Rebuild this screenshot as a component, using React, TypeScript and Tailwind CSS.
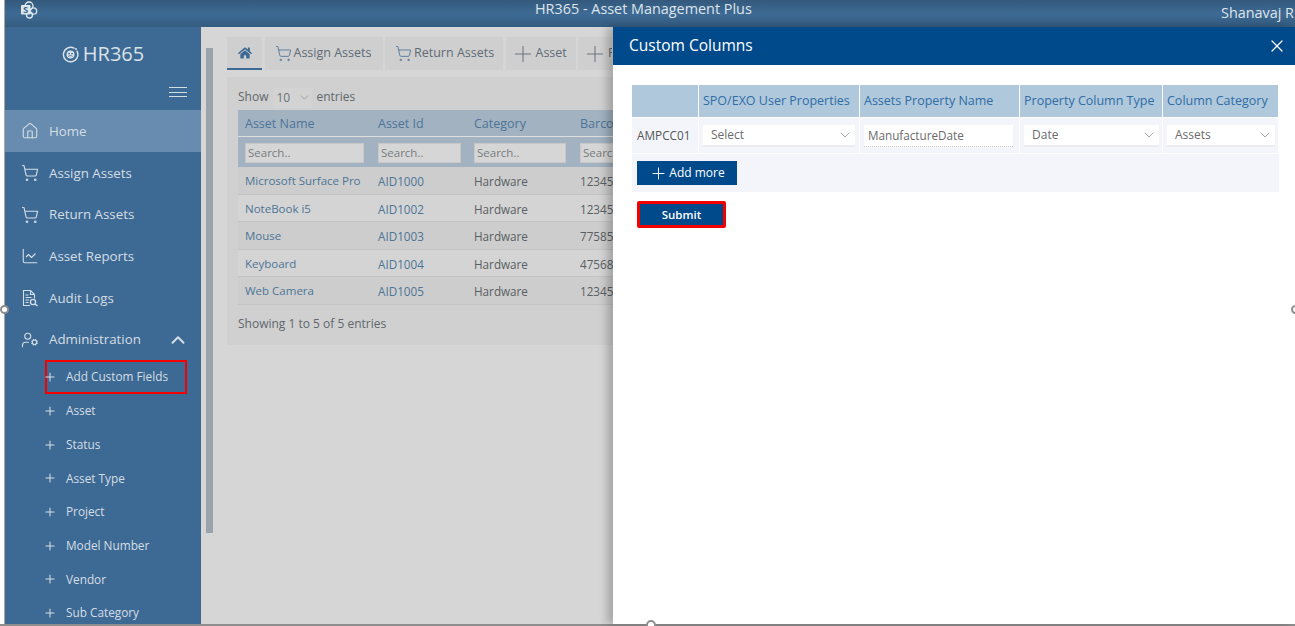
import { ChartLine, ChevronDown, ChevronUp, Home, Plus, ShoppingCart, UserCog, X } from 'lucide-react';
import { FaHome } from 'react-icons/fa';

function AuditIcon({ size = 18 }: { size?: number }) {
  return (
    <svg width={size} height={size} viewBox="0 0 18 18" fill="none" stroke="currentColor" strokeWidth="1.1">
      <path d="M9 16.5H2.5v-15h7l4 4v4" />
      <path d="M9.5 1.5v4h4" />
      <path d="M4.5 6h3M4.5 8.5h6M4.5 11h3.5M4.5 13.5h3" />
      <circle cx="12" cy="13" r="2.6" strokeWidth="1.3" />
      <path d="M14 15l2.5 2" strokeWidth="1.6" />
    </svg>
  );
}

const NAV = [
  { label: 'Home', icon: Home, active: true },
  { label: 'Assign Assets', icon: ShoppingCart },
  { label: 'Return Assets', icon: ShoppingCart },
  { label: 'Asset Reports', icon: ChartLine },
  { label: 'Audit Logs', icon: AuditIcon },
];

const SUB_NAV = ['Asset', 'Status', 'Asset Type', 'Project', 'Model Number', 'Vendor', 'Sub Category'];

const ROWS = [
  { name: 'Microsoft Surface Pro', id: 'AID1000', barcode: '12345' },
  { name: 'NoteBook i5', id: 'AID1002', barcode: '12345' },
  { name: 'Mouse', id: 'AID1003', barcode: '77585' },
  { name: 'Keyboard', id: 'AID1004', barcode: '47568' },
  { name: 'Web Camera', id: 'AID1005', barcode: '12345' },
];

function SharePointLogo() {
  return (
    <svg width="18" height="18" viewBox="0 0 18 18" fill="none" className="text-[#dfe6ec]">
      <circle cx="9" cy="5" r="4" stroke="currentColor" strokeWidth="1.3" />
      <circle cx="13.5" cy="10" r="3.2" stroke="currentColor" strokeWidth="1.3" />
      <circle cx="9.5" cy="14" r="3" stroke="currentColor" strokeWidth="1.3" />
      <rect x="1" y="4" width="9.5" height="9.5" rx="1" fill="currentColor" />
      <text x="5.7" y="12" textAnchor="middle" fontSize="9.5" fontWeight="700" fill="#3d6a94" fontFamily="'Open Sans', sans-serif">S</text>
    </svg>
  );
}

function HrLogo() {
  return (
    <svg width="17" height="17" viewBox="0 0 17 17" fill="none" className="text-[#dbe2e8]">
      <path d="M12 2.2A7.2 7.2 0 1 0 15 5.2" stroke="currentColor" strokeWidth="1.5" strokeLinecap="round" />
      <circle cx="14" cy="3" r="1" fill="currentColor" />
      <circle cx="8.5" cy="8.5" r="4" fill="currentColor" />
      <circle cx="7" cy="7.6" r="0.9" fill="#3d6a94" />
      <circle cx="10" cy="7.6" r="0.9" fill="#3d6a94" />
      <path d="M6.4 10.4c1.2-1 3-1 4.2 0" stroke="#3d6a94" strokeWidth="0.9" />
    </svg>
  );
}

function Sidebar() {
  return (
    <aside className="w-[196px] shrink-0 bg-[#3d6a94] text-[#d5dde4] overflow-hidden">
      <div className="h-[54px] flex items-center justify-center gap-[4px] text-[#dbe2e8] text-[20px] leading-none">
        <HrLogo />
        <span>HR365</span>
      </div>
      <div className="h-[29px] flex justify-end pr-[14px] pt-[6px]">
        <div className="w-[18px] h-[10px] flex flex-col justify-between">
          <div className="h-px bg-[#d5dde4]" />
          <div className="h-px bg-[#d5dde4]" />
          <div className="h-px bg-[#d5dde4]" />
        </div>
      </div>
      <nav>
        {NAV.map((item) => {
          const Icon = item.icon;
          return (
            <div
              key={item.label}
              className={`h-[41.7px] pt-[1px] flex items-center pl-[15px] gap-[10px] text-[13.3px] ${item.active ? 'bg-[#678cb0]' : ''}`}
            >
              <span className="w-[19px] flex justify-center"><Icon size={18} strokeWidth={1.5} /></span>
              <span className="pt-[1px]">{item.label}</span>
            </div>
          );
        })}
        <div className="h-[41.7px] pt-[1px] flex items-center pl-[15px] gap-[10px] text-[13.3px]">
          <span className="w-[19px] flex justify-center"><UserCog size={18} strokeWidth={1.5} /></span>
          <span className="pt-[1px]">Administration</span>
          <ChevronUp size={22} strokeWidth={2.2} className="ml-auto mr-[12px]" />
        </div>
        <div className="ml-[40px] h-[34px] w-[142px] flex items-center gap-[9px] text-[11.8px] border-[2px] border-[#f50000]">
          <Plus size={14} strokeWidth={1.8} className="shrink-0 -ml-[4px]" />
          <span>Add Custom Fields</span>
        </div>
        {SUB_NAV.map((label) => (
          <div key={label} className="h-[33.7px] flex items-center gap-[9px] pl-[38px] text-[11.8px]">
            <Plus size={14} strokeWidth={1.8} className="shrink-0" />
            <span>{label}</span>
          </div>
        ))}
      </nav>
    </aside>
  );
}

function Tab({ label, icon, width }: { label: string; icon: 'cart' | 'plus'; width: string }) {
  return (
    <div className={`h-[33px] bg-[#cfcfcf] flex items-center text-[12.5px] text-[#5f6b75] shrink-0 overflow-hidden whitespace-nowrap ${icon === 'cart' ? 'pl-[10px] gap-[2px]' : 'pl-[4px]'} ${width}`}>
      {icon === 'cart' ? (
        <ShoppingCart size={17} strokeWidth={1.2} className="text-[#4b739a] shrink-0" />
      ) : (
        <Plus size={26} strokeWidth={1} className="text-[#6d7780] shrink-0" />
      )}
      <span>{label}</span>
    </div>
  );
}

function AssetTable() {
  return (
    <div className="mt-[6px]">
      <div className="grid grid-cols-[133px_96px_106px_200px] h-[27px] pt-[2px] bg-[#a2b2c0] items-center text-[12.5px] text-[#4d7499] border-b border-[#dedede]">
        <div className="pl-[7px]">Asset Name</div>
        <div className="pl-[7px]">Asset Id</div>
        <div className="pl-[7px]">Category</div>
        <div className="pl-[7px]">Barcode</div>
      </div>
      <div className="grid grid-cols-[133px_96px_106px_200px] h-[30px] pt-[1px] bg-[#a2b2c0] items-center text-[11.5px] text-[#767c80]">
        <div className="pl-[7px]"><div className="w-[119px] h-[20px] bg-[#d6d6d6] border border-[#c8c8c8] pl-[2px] leading-[18px]">Search..</div></div>
        <div className="pl-[7px]"><div className="w-[83px] h-[20px] bg-[#d6d6d6] border border-[#c8c8c8] pl-[2px] leading-[18px]">Search..</div></div>
        <div className="pl-[7px]"><div className="w-[92px] h-[20px] bg-[#d6d6d6] border border-[#c8c8c8] pl-[2px] leading-[18px]">Search..</div></div>
        <div className="pl-[7px]"><div className="w-[92px] h-[20px] bg-[#d6d6d6] border border-[#c8c8c8] pl-[2px] leading-[18px]">Search..</div></div>
      </div>
      {ROWS.map((row, i) => (
        <div
          key={row.id}
          className={`grid grid-cols-[133px_96px_106px_200px] h-[27.5px] pt-[2px] items-center text-[12px] leading-[16px] border-b border-[#c4c4c4] ${i % 2 === 0 ? 'bg-[#cdcdcd]' : 'bg-[#d4d4d4]'}`}
        >
          <div className="pl-[7px] text-[#4c7597] text-[11.5px]">{row.name}</div>
          <div className="pl-[7px] text-[#4c7597] text-[11.7px]">{row.id}</div>
          <div className="pl-[7px] text-[#5a5f63] text-[11.7px]">Hardware</div>
          <div className="pl-[7px] text-[#5a5f63] text-[11.7px]">{row.barcode}</div>
        </div>
      ))}
    </div>
  );
}

function Background() {
  return (
    <main className="flex-1 bg-[#d6d6d6] flex min-w-0 overflow-hidden">
      <div className="w-[7px] h-[485px] mt-[21px] ml-[5px] bg-[#9aa3a9] shrink-0" />
      <div className="ml-[14px] pt-[10px] flex-1 min-w-0">
        <div className="flex gap-[2.5px]">
          <div className="w-[35px] h-[33px] bg-[#cfcfcf] border-b-2 border-[#3d6a94] flex items-center justify-center text-[#3d6a94] shrink-0">
            <FaHome size={14} />
          </div>
          <Tab label="Assign Assets" icon="cart" width="w-[118px]" />
          <Tab label="Return Assets" icon="cart" width="w-[118px]" />
          <Tab label="Asset" icon="plus" width="w-[70px]" />
          <Tab label="Project" icon="plus" width="w-[34px]" />
        </div>
        <div className="mt-[7px] h-[268px] bg-[#d0d0d0] pl-[11px] pt-[12px]">
          <div className="flex items-center h-[15px] text-[12px] text-[#60676c]">
            <span>Show</span>
            <div className="ml-[5px] w-[39px] h-[20px] flex items-center bg-[#d3d3d3] pl-[3px] mt-[2px] text-[#6d7378]">
              <span>10</span>
              <ChevronDown size={13} strokeWidth={1} className="ml-auto mr-[1px]" />
            </div>
            <span className="ml-[4px]">entries</span>
          </div>
          <AssetTable />
          <div className="mt-[10px] text-[12px] text-[#60676c]">Showing 1 to 5 of 5 entries</div>
        </div>
      </div>
    </main>
  );
}

function SelectBox({ label, width }: { label: string; width: string }) {
  return (
    <div className={`h-[22px] bg-white border-b-2 border-[#ececf0] flex items-center pl-[8px] pr-[2px] text-[12px] text-[#6b6b6b] ${width}`}>
      <span>{label}</span>
      <ChevronDown size={16} strokeWidth={1} className="ml-auto text-[#777777]" />
    </div>
  );
}

function CustomColumns() {
  const head = 'h-[32px] bg-[#b0c8dc] flex items-center pl-[4px] text-[12.5px] text-[#2f6da5] whitespace-nowrap';
  const cell = 'h-[35px] bg-[#f3f5fa] flex items-center pl-[4px]';
  return (
    <div className="absolute top-[27px] bottom-[2px] left-[613px] right-0 bg-white shadow-[-6px_0_8px_rgba(0,0,0,0.22)]">
      <div className="h-[38px] bg-[#004a8c] flex items-center justify-between pl-[16px] pr-[8px] text-white">
        <span className="text-[15.5px]">Custom Columns</span>
        <X size={20} strokeWidth={1.5} />
      </div>
      <div className="pt-[20px] pl-[19px]">
        <div className="grid grid-cols-[66px_160px_159px_142px_115px] gap-x-px gap-y-px w-[646px]">
          <div className={head} />
          <div className={head}>SPO/EXO User Properties</div>
          <div className={head}>Assets Property Name</div>
          <div className={head}>Property Column Type</div>
          <div className={head}>Column Category</div>
          <div className={`${cell} text-[11.8px] text-[#555555] pl-[5px]`}>AMPCC01</div>
          <div className={cell}><SelectBox label="Select" width="w-[152px]" /></div>
          <div className={`${cell} pl-[3px]`}>
            <div className="w-[149px] h-[22px] bg-white border-b border-dotted border-[#cccccc] flex items-center pl-[4px] pt-[1px] text-[11.7px] text-[#6b6b6b]">ManufactureDate</div>
          </div>
          <div className={`${cell} pl-[3px]`}><SelectBox label="Date" width="w-[135px]" /></div>
          <div className={`${cell} pl-[3px]`}><SelectBox label="Assets" width="w-[108px]" /></div>
        </div>
        <div className="mt-px w-[647px] h-[38px] bg-[#f3f5fa] flex items-center pl-[5px]">
          <div className="w-[100px] h-[24px] bg-[#004a8c] text-white flex items-center justify-center gap-[1px] text-[12px]">
            <Plus size={19} strokeWidth={1.2} />
            <span>Add more</span>
          </div>
        </div>
        <div className="mt-[9px] ml-[5px] w-[89px] h-[27px] border-[3px] border-[#f50000] rounded-[2px] bg-[#004a8c] text-white flex items-center justify-center text-[11.5px] font-semibold">
          Submit
        </div>
      </div>
    </div>
  );
}

export default function App() {
  return (
    <div className="relative w-[1295px] h-[626px] overflow-hidden bg-white font-['Open_Sans',sans-serif]">
      <div className="h-[624px] flex flex-col ml-[4px] border-l border-[#a8a8a8]">
        <header className="h-[27px] shrink-0 bg-gradient-to-b from-[#34597c] via-[#3d6a94] to-[#355c80] flex items-center relative text-[#dfe5ea]">
          <div className="ml-[15px] -mt-[8px]"><SharePointLogo /></div>
          <div className="absolute left-[530px] -top-[2px] text-[14.4px]">HR365 - Asset Management Plus</div>
          <div className="absolute left-[1216px] top-[2px] text-[14.4px] whitespace-nowrap">Shanavaj R</div>
        </header>
        <div className="flex flex-1 min-h-0">
          <Sidebar />
          <Background />
        </div>
      </div>
      <div className="h-[2px] bg-[#8e8e8e]" />
      <CustomColumns />
      <div className="absolute left-0 top-[305px] w-[9px] h-[9px] rounded-full bg-white border-2 border-[#8e8e8e]" />
      <div className="absolute left-[1291px] top-[305px] w-[9px] h-[9px] rounded-full bg-white border-2 border-[#8e8e8e]" />
      <div className="absolute left-[646px] top-[620px] w-[10px] h-[10px] rounded-full bg-white border-2 border-[#8e8e8e]" />
    </div>
  );
}
